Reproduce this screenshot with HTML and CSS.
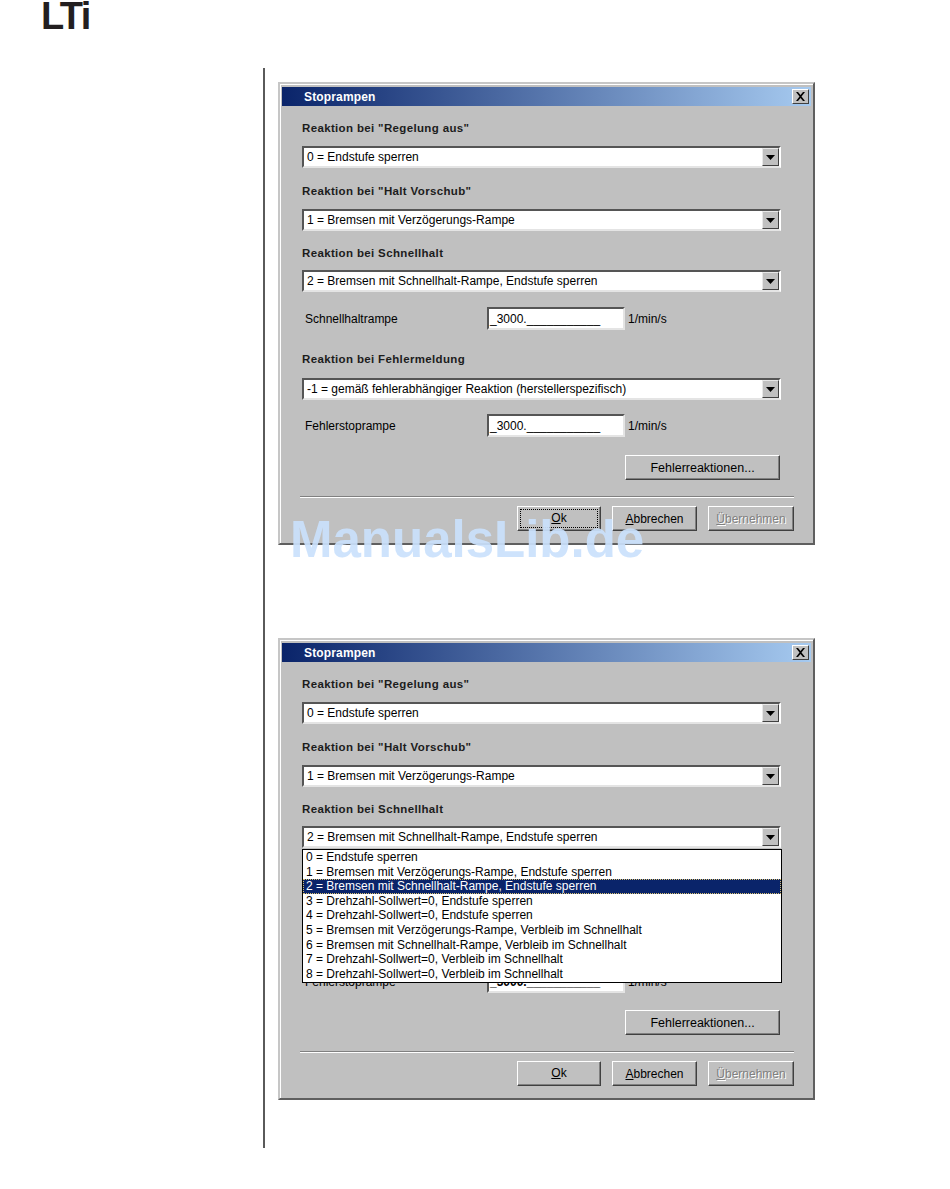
FILE: index.html
```html
<!DOCTYPE html>
<html lang="de">
<head>
<meta charset="utf-8">
<title>Stoprampen</title>
<link rel="stylesheet" href="styles.css">
</head>
<body>
<div class="page">
  <header class="logo-bar"><span class="logo">LTi</span></header>
  <main class="content">
    <section class="dialog">
      <div class="titlebar"><span class="title">Stoprampen</span><span class="close"><svg width="11" height="9" viewBox="0 0 11 9"><path d="M1 0h2l2.500 3 2.500-3h2l-3.500 4.500 3.500 4.500h-2l-2.500-3-2.500 3h-2l3.500-4.500z" fill="#000"/></svg></span></div>
      <div class="body">
        <div class="heading h1">Reaktion bei "Regelung aus"</div>
        <div class="combo c1"><span class="combo-text">0 = Endstufe sperren</span><span class="drop"><svg width="9" height="5" viewBox="0 0 9 5"><path d="M0 0h9L4.500 5z" fill="#000"/></svg></span></div>
        <div class="heading h2">Reaktion bei "Halt Vorschub"</div>
        <div class="combo c1"><span class="combo-text">1 = Bremsen mit Verzögerungs-Rampe</span><span class="drop"><svg width="9" height="5" viewBox="0 0 9 5"><path d="M0 0h9L4.500 5z" fill="#000"/></svg></span></div>
        <div class="heading h1">Reaktion bei Schnellhalt</div>
        <div class="combo c2"><span class="combo-text">2 = Bremsen mit Schnellhalt-Rampe, Endstufe sperren</span><span class="drop"><svg width="9" height="5" viewBox="0 0 9 5"><path d="M0 0h9L4.500 5z" fill="#000"/></svg></span></div>
        <div class="field f1"><span class="field-label">Schnellhaltrampe</span><span class="input">_3000.___________</span><span class="unit">1/min/s</span></div>
        <div class="heading h3">Reaktion bei Fehlermeldung</div>
        <div class="combo c3"><span class="combo-text">-1 = gemäß fehlerabhängiger Reaktion (herstellerspezifisch)</span><span class="drop"><svg width="9" height="5" viewBox="0 0 9 5"><path d="M0 0h9L4.500 5z" fill="#000"/></svg></span></div>
        <div class="field f2"><span class="field-label">Fehlerstoprampe</span><span class="input">_3000.___________</span><span class="unit">1/min/s</span></div>
        <div class="action-row"><button class="btn btn-wide">Fehlerreaktionen...</button></div>
        <div class="separator"></div>
        <div class="footer">
          <button class="btn btn-ok"><span class="focus"><u>O</u>k</span></button>
          <button class="btn btn-cancel"><u>A</u>bbrechen</button>
          <button class="btn btn-apply" disabled><u>Ü</u>bernehmen</button>
        </div>
      </div>
    </section>

    <section class="dialog dialog-open">
      <div class="titlebar"><span class="title">Stoprampen</span><span class="close"><svg width="11" height="9" viewBox="0 0 11 9"><path d="M1 0h2l2.500 3 2.500-3h2l-3.500 4.500 3.500 4.500h-2l-2.500-3-2.500 3h-2l3.500-4.500z" fill="#000"/></svg></span></div>
      <div class="body">
        <div class="heading h1">Reaktion bei "Regelung aus"</div>
        <div class="combo c1"><span class="combo-text">0 = Endstufe sperren</span><span class="drop"><svg width="9" height="5" viewBox="0 0 9 5"><path d="M0 0h9L4.500 5z" fill="#000"/></svg></span></div>
        <div class="heading h2">Reaktion bei "Halt Vorschub"</div>
        <div class="combo c1"><span class="combo-text">1 = Bremsen mit Verzögerungs-Rampe</span><span class="drop"><svg width="9" height="5" viewBox="0 0 9 5"><path d="M0 0h9L4.500 5z" fill="#000"/></svg></span></div>
        <div class="heading h1">Reaktion bei Schnellhalt</div>
        <div class="combo c2"><span class="combo-text">2 = Bremsen mit Schnellhalt-Rampe, Endstufe sperren</span><span class="drop"><svg width="9" height="5" viewBox="0 0 9 5"><path d="M0 0h9L4.500 5z" fill="#000"/></svg></span>
          <ul class="popup">
            <li>0 = Endstufe sperren</li>
            <li>1 = Bremsen mit Verzögerungs-Rampe, Endstufe sperren</li>
            <li class="selected">2 = Bremsen mit Schnellhalt-Rampe, Endstufe sperren</li>
            <li>3 = Drehzahl-Sollwert=0, Endstufe sperren</li>
            <li>4 = Drehzahl-Sollwert=0, Endstufe sperren</li>
            <li>5 = Bremsen mit Verzögerungs-Rampe, Verbleib im Schnellhalt</li>
            <li>6 = Bremsen mit Schnellhalt-Rampe, Verbleib im Schnellhalt</li>
            <li>7 = Drehzahl-Sollwert=0, Verbleib im Schnellhalt</li>
            <li>8 = Drehzahl-Sollwert=0, Verbleib im Schnellhalt</li>
          </ul>
        </div>
        <div class="field f1"><span class="field-label">Schnellhaltrampe</span><span class="input">_3000.___________</span><span class="unit">1/min/s</span></div>
        <div class="heading h3">Reaktion bei Fehlermeldung</div>
        <div class="combo c3"><span class="combo-text">-1 = gemäß fehlerabhängiger Reaktion (herstellerspezifisch)</span><span class="drop"><svg width="9" height="5" viewBox="0 0 9 5"><path d="M0 0h9L4.500 5z" fill="#000"/></svg></span></div>
        <div class="field f2"><span class="field-label">Fehlerstoprampe</span><span class="input input-heavy">_3000.___________</span><span class="unit">1/min/s</span></div>
        <div class="action-row"><button class="btn btn-wide">Fehlerreaktionen...</button></div>
        <div class="separator"></div>
        <div class="footer">
          <button class="btn btn-ok"><span class="plain"><u>O</u>k</span></button>
          <button class="btn btn-cancel"><u>A</u>bbrechen</button>
          <button class="btn btn-apply" disabled><u>Ü</u>bernehmen</button>
        </div>
      </div>
    </section>
  </main>
  <div class="watermark">ManualsLib.de</div>
</div>
</body>
</html>
```

FILE: styles.css
```css
* { box-sizing: border-box; }

html, body {
  margin: 0;
  background: #fff;
}

body {
  font-family: "Liberation Sans", Arial, sans-serif;
  font-size: 12px;
  color: #000;
}

.page {
  position: relative;
  width: 950px;
  height: 1189px;
  overflow: hidden;
}

.logo-bar {
  height: 68px;
  padding-left: 41px;
}

.logo {
  display: block;
  font-size: 38px;
  font-weight: 700;
  line-height: 32px;
  letter-spacing: -1.6px;
  color: #231f20;
}

.content {
  margin-left: 263px;
  width: 560px;
  height: 1080px;
  border-left: 2px solid #5a5a5a;
  padding: 14px 0 0 13px;
  display: flex;
  flex-direction: column;
  gap: 93px;
}

.dialog {
  width: 537px;
  height: 463px;
  background: #c0c0c0;
  border: 2px solid;
  border-color: #c6c6c6 #5f5f5f #5f5f5f #c6c6c6;
  box-shadow: inset 1px 1px 0 #fff;
  padding: 3px 2px 0 2px;
  display: flex;
  flex-direction: column;
}

.dialog-open {
  height: 462px;
}

.titlebar {
  height: 19px;
  flex: none;
  display: flex;
  align-items: center;
  justify-content: space-between;
  padding: 0 2px 0 22px;
  background: linear-gradient(90deg, #0a246a, #a6caf0);
}

.title {
  color: #fff;
  font-weight: 700;
  font-size: 12px;
  letter-spacing: 0.15px;
}

.close {
  width: 17px;
  height: 15px;
  background: #c0c0c0;
  border: 1px solid;
  border-color: #fff #404040 #404040 #fff;
  display: flex;
  align-items: center;
  justify-content: center;
}

.body {
  position: relative;
  padding: 0 30px 0 20px;
  display: flex;
  flex-direction: column;
}

.heading {
  height: 14px;
  line-height: 14px;
  font-weight: 700;
  font-size: 11.5px;
  letter-spacing: 0.35px;
  color: #1c1c1c;
  white-space: nowrap;
}

.h1 { margin-top: 15px; }
.h2 { margin-top: 16px; }
.h3 { margin-top: 22px; }

.combo {
  position: relative;
  height: 22px;
  flex: none;
  background: #fff;
  border: 2px solid;
  border-color: #555 #fff #fff #555;
  border-bottom-color: #e4e4e4;
  display: flex;
  align-items: center;
  justify-content: space-between;
}

.c1 { margin-top: 11px; }
.c2 { margin-top: 10px; }
.c3 { margin-top: 12px; }

.combo-text {
  padding-left: 3px;
  white-space: nowrap;
}

.drop {
  width: 17px;
  height: 18px;
  background: #c0c0c0;
  border: 1px solid;
  border-color: #e8e8e8 #404040 #404040 #e8e8e8;
  display: flex;
  align-items: center;
  justify-content: center;
}

.popup {
  position: absolute;
  left: -2px;
  top: 21px;
  z-index: 2;
  width: 480px;
  height: 134px;
  margin: 0;
  padding: 0;
  list-style: none;
  background: #fff;
  border: 1px solid #000;
}

.popup li {
  height: 14.6px;
  line-height: 14.6px;
  padding-left: 3px;
  white-space: nowrap;
}

.popup .selected {
  background: #0a246a;
  color: #fff;
  outline: 1px dotted #d8c070;
  outline-offset: -1px;
}

.field {
  display: flex;
  align-items: center;
  height: 23px;
}

.f1 { margin-top: 15px; }
.f2 { margin-top: 14px; }

.field-label {
  width: 185px;
  padding-left: 3px;
}

.input {
  width: 138px;
  height: 23px;
  background: #fff;
  border: 2px solid;
  border-color: #555 #e4e4e4 #e4e4e4 #555;
  padding-left: 1px;
  line-height: 20px;
  white-space: nowrap;
  overflow: hidden;
}

.input-heavy {
  font-weight: 700;
}

.unit {
  margin-left: 3px;
}

.action-row {
  margin-top: 18px;
  display: flex;
  justify-content: flex-end;
  padding-right: 1px;
}

.dialog-open .action-row {
  margin-top: 17px;
}

.btn {
  height: 25px;
  padding: 0;
  font: inherit;
  color: #000;
  background: #c0c0c0;
  border: 1px solid;
  border-color: #fff #404040 #404040 #fff;
  box-shadow: inset -1px -1px 0 #808080;
  display: flex;
  align-items: center;
  justify-content: center;
}

.btn-wide {
  width: 155px;
  font-size: 12.5px;
}

.separator {
  margin: 16px -13px 0 -2px;
  height: 2px;
  background: #fff;
  border-top: 1px solid #808080;
}

.footer {
  margin: 8px -13px 0 0;
  padding-left: 215px;
  display: flex;
  gap: 11px;
}

.btn-ok { width: 84px; }
.btn-cancel { width: 85px; }
.btn-apply {
  width: 86px;
  color: #808080;
  text-shadow: 1px 1px 0 #fff;
}

.focus, .plain {
  width: 78px;
  height: 19px;
  line-height: 17px;
  text-align: center;
  border: 1px dotted transparent;
}

.focus {
  border-color: #000;
}

.watermark {
  position: absolute;
  left: 290px;
  top: 510px;
  font-size: 51px;
  line-height: 60px;
  font-weight: 700;
  color: rgba(202, 225, 252, 0.92);
  white-space: nowrap;
}
```
